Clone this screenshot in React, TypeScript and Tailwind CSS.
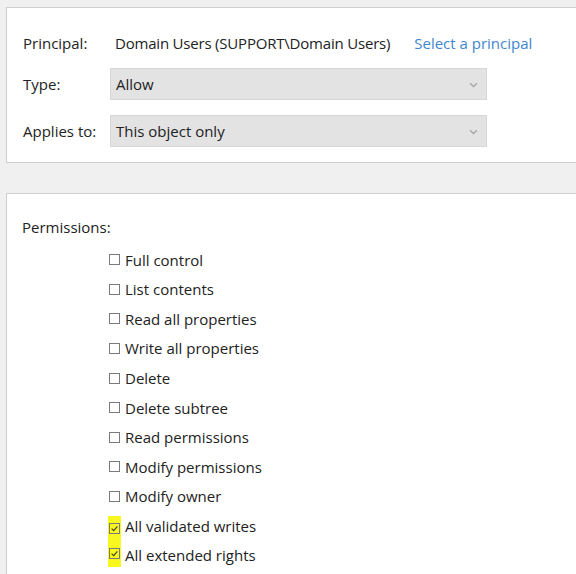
const PERMS = [
  { label: 'Full control', checked: false },
  { label: 'List contents', checked: false },
  { label: 'Read all properties', checked: false },
  { label: 'Write all properties', checked: false },
  { label: 'Delete', checked: false },
  { label: 'Delete subtree', checked: false },
  { label: 'Read permissions', checked: false },
  { label: 'Modify permissions', checked: false },
  { label: 'Modify owner', checked: false },
  { label: 'All validated writes', checked: true },
  { label: 'All extended rights', checked: true },
];

function Select({ value }: { value: string }) {
  return (
    <div className="flex h-[32px] w-[377px] items-center justify-between border border-[#d6d6d6] bg-[#e3e3e3] pl-[5px] pr-[8px]">
      <span>{value}</span>
      <svg width="9" height="6" viewBox="0 0 9 6" className="mt-[1px]">
        <path d="M1 1.2 L4.5 4.5 L8 1.2" fill="none" stroke="#a5a5a5" strokeWidth="1.3" />
      </svg>
    </div>
  );
}

function Checkbox({ checked }: { checked: boolean }) {
  return (
    <span className="flex h-[11px] w-[11px] items-center justify-center border border-[#7a7a7a]">
      {checked && (
        <svg width="9" height="9" viewBox="0 0 9 9">
          <path d="M1.6 4.6 L3.7 6.6 L7.4 2.4" fill="none" stroke="#4a4a1a" strokeWidth="1.3" />
        </svg>
      )}
    </span>
  );
}

export default function App() {
  return (
    <div
      className="h-[574px] w-[576px] overflow-hidden bg-[#f0f0f0] pl-[6px] pt-[7px] text-[15px] text-[#222]"
      style={{ fontFamily: '"Open Sans", "Noto Sans", sans-serif' }}
    >
      {/* Principal / type / scope */}
      <section className="h-[156px] border border-r-0 border-[#cfcfcf] bg-white pl-[16px] pt-[22px]">
        <div className="flex h-[26px] items-center">
          <span className="w-[92px]">Principal:</span>
          <span className="tracking-[-0.2px]">Domain Users (SUPPORT\Domain Users)</span>
          <a href="#" className="ml-[24px] text-[#3f86cf]">Select a principal</a>
        </div>
        <div className="mt-[12px] flex items-center">
          <span className="w-[87px]">Type:</span>
          <Select value="Allow" />
        </div>
        <div className="mt-[15px] flex items-center">
          <span className="w-[87px]">Applies to:</span>
          <Select value="This object only" />
        </div>
      </section>

      {/* Permissions */}
      <section className="mt-[30px] h-[400px] border border-r-0 border-[#cfcfcf] bg-white pl-[15px] pt-[21px]">
        <div className="flex h-[24px] items-center">Permissions:</div>
        <div className="mt-[6px] flex flex-col pl-[86px]">
          {PERMS.map((p, i) => {
            const prev = PERMS[i - 1]?.checked;
            const next = PERMS[i + 1]?.checked;
            return (
              <div key={p.label} className="flex h-[29.6px] items-center gap-[4px]">
                {p.checked ? (
                  <span
                    className={
                      'flex items-center self-stretch bg-[#f8f820] px-[1px] ' +
                      (prev ? '' : 'mt-[5px] ') +
                      (next ? '' : 'mb-[4px]')
                    }
                  >
                    <Checkbox checked />
                  </span>
                ) : (
                  <span className="flex px-[1px]">
                    <Checkbox checked={false} />
                  </span>
                )}
                <span>{p.label}</span>
              </div>
            );
          })}
        </div>
      </section>
    </div>
  );
}
